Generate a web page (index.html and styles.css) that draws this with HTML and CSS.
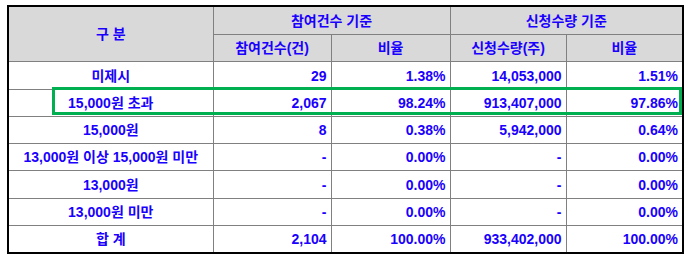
FILE: index.html
```html
<!DOCTYPE html>
<html lang="ko">
<head>
<meta charset="utf-8">
<link rel="stylesheet" href="styles.css">
</head>
<body>
<div class="wrap">
  <table class="grid">
    <colgroup>
      <col class="c1"><col class="c2"><col class="c3"><col class="c4"><col class="c5">
    </colgroup>
    <thead>
      <tr class="tall">
        <th rowspan="2">구 분</th>
        <th colspan="2">참여건수 기준</th>
        <th colspan="2">신청수량 기준</th>
      </tr>
      <tr class="short">
        <th>참여건수(건)</th>
        <th>비율</th>
        <th>신청수량(주)</th>
        <th>비율</th>
      </tr>
    </thead>
    <tbody>
      <tr class="tall"><td class="lbl">미제시</td><td>29</td><td>1.38%</td><td>14,053,000</td><td>1.51%</td></tr>
      <tr class="short"><td class="lbl">15,000원 초과</td><td>2,067</td><td>98.24%</td><td>913,407,000</td><td>97.86%</td></tr>
      <tr class="short"><td class="lbl">15,000원</td><td>8</td><td>0.38%</td><td>5,942,000</td><td>0.64%</td></tr>
      <tr class="short"><td class="lbl">13,000원 이상 15,000원 미만</td><td>-</td><td>0.00%</td><td>-</td><td>0.00%</td></tr>
      <tr class="tall"><td class="lbl">13,000원</td><td>-</td><td>0.00%</td><td>-</td><td>0.00%</td></tr>
      <tr class="short"><td class="lbl">13,000원 미만</td><td>-</td><td>0.00%</td><td>-</td><td>0.00%</td></tr>
      <tr class="short"><td class="lbl">합 계</td><td>2,104</td><td>100.00%</td><td>933,402,000</td><td>100.00%</td></tr>
    </tbody>
  </table>
  <div class="highlight"></div>
</div>
</body>
</html>
```
FILE: styles.css
```css
html, body {
  margin: 0;
  padding: 0;
  background: #ffffff;
}
body {
  padding: 5px 7px;
  font-family: "Liberation Sans", "Noto Sans CJK KR", sans-serif;
  font-size: 14px;
  font-weight: bold;
  color: #1a00ff;
}
.wrap {
  position: relative;
  width: 677px;
}
.grid {
  border-collapse: collapse;
  table-layout: fixed;
  width: 677px;
  border: 2px solid #000000;
}
.c1 { width: 205px; }
.c2 { width: 118px; }
.c3 { width: 119px; }
.c4 { width: 116px; }
.c5 { width: 117px; }
.grid th, .grid td {
  border: 1px solid #808080;
  padding: 0 4px 0 0;
  line-height: 16px;
  white-space: nowrap;
  overflow: hidden;
}
.tall > th, .tall > td { height: 27px; }
.short > th, .short > td { height: 26px; }
.grid th {
  background: #d9d9d9;
  font-weight: bold;
  text-align: center;
  padding: 0;
}
.grid td {
  text-align: right;
}
.grid td.lbl {
  text-align: center;
  padding: 0;
}
.highlight {
  position: absolute;
  left: 45px;
  top: 82px;
  width: 630px;
  height: 28px;
  box-sizing: border-box;
  border: 3px solid #00b050;
}
```
